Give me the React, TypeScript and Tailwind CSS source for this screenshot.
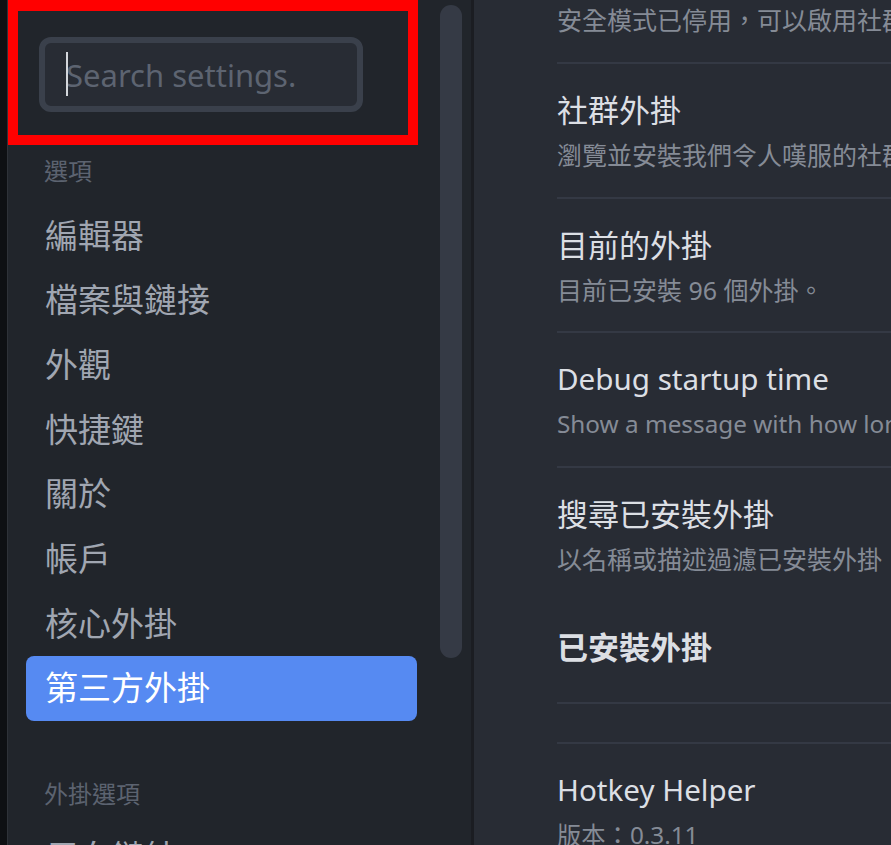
import React from 'react';

const font = { fontFamily: '"Noto Sans", "Noto Sans CJK TC", sans-serif' };

const navItems = ['編輯器', '檔案與鏈接', '外觀', '快捷鍵', '關於', '帳戶', '核心外掛', '第三方外掛'];

interface SettingItem {
  title: string;
  desc: string;
  latin?: boolean;
}

const items: SettingItem[] = [
  { title: '安全模式', desc: '安全模式已停用，可以啟用社群外掛。' },
  { title: '社群外掛', desc: '瀏覽並安裝我們令人嘆服的社群所製作的外掛。' },
  { title: '目前的外掛', desc: '目前已安裝 96 個外掛。' },
  { title: 'Debug startup time', desc: 'Show a message with how long each plugin took to load on startup.', latin: true },
  { title: '搜尋已安裝外掛', desc: '以名稱或描述過濾已安裝外掛' },
];

const Item = ({ title, desc, latin }: SettingItem) => (
  <div className="border-t-2 border-[#343944] pt-[24px] pb-[21.67px] whitespace-nowrap">
    <div className={latin ? 'text-[29.6px] leading-[44px] text-[#dcdfe4]' : 'text-[31px] leading-[44px] text-[#dcdfe4]'}>
      {title}
    </div>
    <div className={latin ? 'mt-[3px] text-[24.3px] leading-[40px] text-[#858b96]' : 'mt-[3px] text-[25px] leading-[40px] text-[#858b96]'}>
      {desc}
    </div>
  </div>
);

const Sidebar = () => (
  <div className="flex w-[463px] shrink-0 bg-[#21252b]">
    <div className="flex-1">
      {/* search */}
      <div className="h-[145px] pt-[37px] pl-[31px]">
        <div className="relative h-[75px] w-[324px] rounded-[12px] border-[6px] border-[#3a404b] bg-[#282c34]">
          <input
            placeholder="Search settings."
            className="h-full w-full bg-transparent pl-[21px] text-[31px] text-[#dcdfe4] placeholder-[#5d6471] outline-none caret-transparent"
            style={font}
          />
          <span className="absolute left-[21px] top-[9px] h-[44px] w-[2px] bg-[#d4d7dc]" />
        </div>
      </div>

      <div className="mt-[10px] pl-[36px] text-[24px] leading-[32px] text-[#5c6370]">選項</div>

      <div className="mt-[16px]">
        {navItems.map((name) => {
          const active = name === '第三方外掛';
          return (
            <div
              key={name}
              className={
                active
                  ? 'ml-[18px] flex h-[64.7px] w-[391px] items-center rounded-[8px] bg-[#568af2] pl-[19px] text-[33px] text-white'
                  : 'ml-[18px] flex h-[64.7px] w-[391px] items-center pl-[19px] text-[33px] text-[#a0a6b1]'
              }
            >
              {name}
            </div>
          );
        })}
      </div>

      <div className="mt-[57px] pl-[36px] text-[24px] leading-[32px] text-[#5c6370]">外掛選項</div>
      <div className="mt-[15px] flex h-[64.7px] items-center pl-[37px] text-[33px] text-[#a0a6b1]">反向鏈結</div>
    </div>

    {/* scrollbar */}
    <div className="w-[31px] pt-[5px]">
      <div className="h-[653px] w-[22px] rounded-full bg-[#353a45]" />
    </div>
  </div>
);

const App = () => {
  return (
    <div className="relative flex h-[845px] w-[891px] overflow-hidden bg-[#282c34]" style={font}>
      {/* background window edge */}
      <div className="w-[8px] shrink-0 border-r border-[#2e3238] bg-[#0e1013]" />

      <Sidebar />
      <div className="w-[3px] shrink-0 bg-[#1b1d22]" />

      <main className="flex-1 overflow-hidden pl-[83px]">
        <div className="-mt-[72.67px]">
          {items.map((it) => (
            <Item key={it.title} {...it} />
          ))}
          <div className="pt-[24px] pb-[33.7px]">
            <div className="text-[31px] font-bold leading-[44px] text-[#dcdfe4]">已安裝外掛</div>
          </div>
          <div className="h-[40px] border-t-2 border-[#343944]" />
          <Item title="Hotkey Helper" desc="版本：0.3.11" latin />
        </div>
      </main>

      {/* annotation box */}
      <div className="pointer-events-none absolute left-[8px] top-0 h-[145px] w-[410px] border-[10px] border-t-[11px] border-[#ff0000]" />
    </div>
  );
};

export default App;
